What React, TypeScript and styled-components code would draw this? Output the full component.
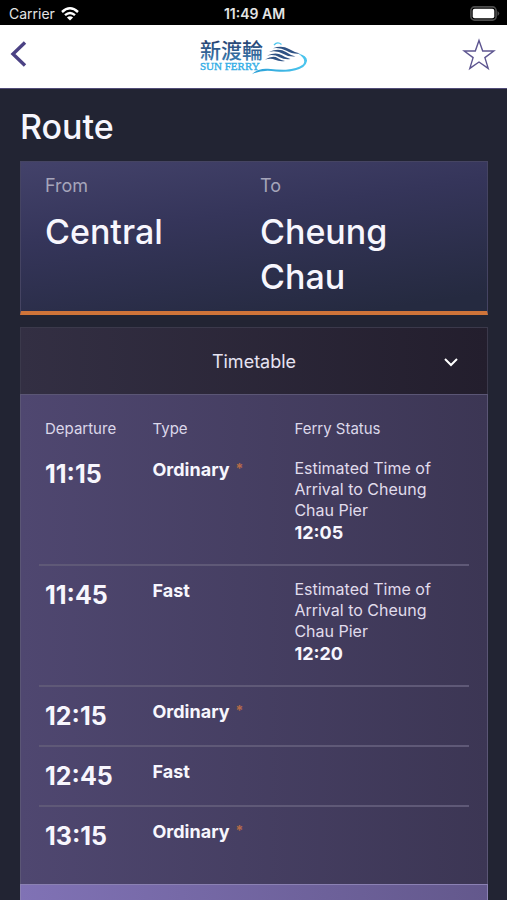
import React from "react";
import styled, { createGlobalStyle } from "styled-components";

const GlobalStyle = createGlobalStyle`
  *, *::before, *::after { box-sizing: border-box; }
  body {
    margin: 0;
    background: #222433;
    color: #f7f6fd;
    font-family: Inter, "Noto Sans CJK TC", sans-serif;
  }
  button { font: inherit; color: inherit; }
`;

const Screen = styled.div`
  min-height: 100vh;
  display: flex;
  flex-direction: column;
`;

const StatusBar = styled.div`
  height: 25px;
  padding: 2px 7px 0 9px;
  display: grid;
  grid-template-columns: 1fr auto 1fr;
  align-items: center;
  background: #000;
  color: #e4e4e4;
  font-size: 14px;
  line-height: 20px;
`;

const Carrier = styled.div`
  display: flex;
  align-items: center;
  gap: 6px;
`;

const Clock = styled.time`
  font-weight: 600;
`;

const Battery = styled.svg`
  justify-self: end;
`;

const NavBar = styled.header`
  height: 64px;
  padding: 0 11px 4px 9px;
  display: grid;
  grid-template-columns: 1fr auto 1fr;
  align-items: center;
  background: #fff;
  border-bottom: 1px solid #514b77;
`;

const IconButton = styled.button<{ $end?: boolean }>`
  display: flex;
  padding: 0;
  border: 0;
  background: none;
  justify-self: ${(p) => (p.$end ? "end" : "start")};
`;

const Content = styled.main`
  flex: 1;
  display: flex;
  flex-direction: column;
  padding: 14px 19px 0 20px;
`;

const PageTitle = styled.h1`
  margin: 0 0 10px;
  font-size: 34px;
  line-height: 48px;
  font-weight: 500;
`;

const RouteCard = styled.section`
  display: grid;
  grid-template-columns: 1fr 1fr;
  column-gap: 12px;
  padding: 12px 24px;
  border: 1px solid #454462;
  border-bottom: 4px solid #cf7439;
  background: linear-gradient(172deg, #43426a 0%, #35355a 38%, #252a40 92%);
`;

const StopLabel = styled.div`
  font-size: 18px;
  line-height: 24px;
  color: #a5a5ba;
`;

const StopName = styled.div`
  margin-top: 11px;
  font-size: 34px;
  line-height: 45px;
  font-weight: 500;
`;

const Timetable = styled.section`
  flex: 1;
  display: flex;
  flex-direction: column;
  margin-top: 12px;
`;

const TimetableToggle = styled.button`
  height: 67px;
  padding: 2px 28px 0;
  display: grid;
  grid-template-columns: 1fr auto 1fr;
  align-items: center;
  border: 1px solid #3b394b;
  border-bottom: 0;
  background: linear-gradient(90deg, #332f43, #231e2d);
  color: #e6e3f2;
  font-size: 18px;
  line-height: 24px;
`;

const ToggleLabel = styled.span`
  grid-column: 2;
`;

const Chevron = styled.svg`
  justify-self: end;
`;

const Panel = styled.div`
  padding: 16px 18px 19px;
  border: 1px solid #5b5675;
  border-bottom: 0;
  background: linear-gradient(90deg, #4f4770, #3c3654);
`;

const Table = styled.table`
  width: 100%;
  table-layout: fixed;
  border-collapse: collapse;
  text-align: left;
`;

const HeadCell = styled.th<{ $width?: string }>`
  width: ${(p) => p.$width ?? "auto"};
  padding: 8px 6px 6px;
  font-size: 15px;
  line-height: 20px;
  font-weight: 400;
  color: #dcd8ea;
`;

const Row = styled.tr`
  & + & { border-top: 2px solid #5f5977; }
`;

const Cell = styled.td`
  padding: 12px 6px;
  vertical-align: top;
`;

const Departure = styled.div`
  padding: 1px 0;
  font-size: 25px;
  line-height: 32px;
  font-weight: 700;
`;

const FerryType = styled.div`
  display: flex;
  gap: 6px;
  font-size: 18px;
  line-height: 26px;
  font-weight: 700;
`;

const Mark = styled.span`
  color: #b56b48;
  font-size: 14px;
  line-height: 24px;
`;

const FerryStatus = styled.div`
  padding: 1px 0 7px;
`;

const StatusText = styled.div`
  font-size: 16px;
  line-height: 21px;
  color: #e0dcec;
`;

const Arrival = styled.div`
  font-size: 18px;
  line-height: 24px;
  font-weight: 700;
`;

const NextSection = styled.div`
  flex: 1;
  border: 1px solid #8b81b3;
  border-bottom: 0;
  background: linear-gradient(90deg, #8072b5, #63588c);
`;

interface Sailing {
  time: string;
  type: string;
  marked?: boolean;
  arrival?: string;
}

const sailings: Sailing[] = [
  { time: "11:15", type: "Ordinary", marked: true, arrival: "12:05" },
  { time: "11:45", type: "Fast", arrival: "12:20" },
  { time: "12:15", type: "Ordinary", marked: true },
  { time: "12:45", type: "Fast" },
  { time: "13:15", type: "Ordinary", marked: true },
];

const WifiIcon = () => (
  <svg width="18" height="14" viewBox="0 0 18 14" fill="none" stroke="#fff" strokeWidth="2.4" aria-hidden="true">
    <path d="M1 5Q9-2.4 17 5" />
    <path d="M4 8.2Q9 3.6 14 8.2" />
    <path d="M9 13.6L5.9 10.4Q9 7.9 12.1 10.4Z" fill="#fff" stroke="none" />
  </svg>
);

const BatteryIcon = () => (
  <Battery width="30" height="15" viewBox="0 0 30 15" aria-label="Battery full">
    <rect x="0.9" y="0.9" width="25.2" height="13.2" rx="3.6" fill="#000" stroke="#4d4d4d" strokeWidth="1.6" />
    <rect x="2.7" y="2.7" width="21.6" height="9.6" rx="2" fill="#fff" />
    <path d="M27.5 5Q31 7.5 27.5 10Z" fill="#4d4d4d" />
  </Battery>
);

const Logo = () => (
  <svg width="110" height="54" viewBox="0 -9 110 54" role="img" aria-label="Sun Ferry">
    <defs>
      <linearGradient id="ink" x1="0" y1="0" x2="0" y2="1">
        <stop offset="0.2" stopColor="#263f6e" />
        <stop offset="1" stopColor="#3f86bd" />
      </linearGradient>
      <linearGradient id="wave" x1="0" y1="0" x2="1" y2="0">
        <stop offset="0" stopColor="#2a9fd6" />
        <stop offset="1" stopColor="#4cc6ee" />
      </linearGradient>
    </defs>
    <text x="2" y="21" fontFamily="Noto Sans CJK TC, sans-serif" fontWeight="500" fontSize="21" fill="url(#ink)">新渡輪</text>
    <text x="2" y="33" fontFamily="Liberation Serif, serif" fontSize="11" fill="#35aee6" stroke="#35aee6" strokeWidth="0.4">SUN FERRY</text>
    <path d="M76 8Q79.500 4 83.500 7.500" fill="none" stroke="#4cc6ee" strokeWidth="1.3" />
    <g fill="#2f5284">
      <path d="M75 11.200Q84 8 91 12Q96 15 102 16.600Q94 17.200 88.500 13.800Q82 10 75 11.200Z" />
      <path d="M71 14.800Q81 10.800 88 15Q92 18 97.500 19.400Q90.500 20 85.500 17Q79 13 71 14.800Z" />
      <path d="M69 18.600Q78 14.400 84 18.200Q87.500 20.800 92.500 22Q86.500 22.800 81.500 20.200Q76 16.800 69 18.600Z" />
      <path d="M67 22.600Q75 17.800 80 21.200Q83 23.200 87 24Q81.500 24.800 77 22.800Q73 20.600 67 22.600Z" />
    </g>
    <path d="M100 16.400Q109.500 18.500 109 24Q108 30.500 97.500 33.200Q89 35.600 78 34.400Q64 32 54 37.200Q60 31 70 31.800Q80 33 88 32.800Q99 31.800 105 27.600Q109 22 100 16.400Z" fill="url(#wave)" />
  </svg>
);

export default function App() {
  return (
    <Screen>
      <GlobalStyle />
      <StatusBar>
        <Carrier>
          Carrier
          <WifiIcon />
        </Carrier>
        <Clock>11:49 AM</Clock>
        <BatteryIcon />
      </StatusBar>
      <NavBar>
        <IconButton type="button" aria-label="Back">
          <svg width="20" height="32" viewBox="0 0 20 32" fill="none" stroke="#4b4284" strokeWidth="3.4">
            <path d="M16 3.500L4 15L16 26.500" />
          </svg>
        </IconButton>
        <Logo />
        <IconButton type="button" aria-label="Add to favourites" $end>
          <svg width="34" height="34" viewBox="0 0 34 34" fill="none" stroke="#5d5590" strokeWidth="1.4">
            <path d="M17 2.400L20.700 13H31.800L22.900 19.600L26.200 30.400L17 24L7.800 30.400L11.100 19.600L2.200 13H13.300Z" />
          </svg>
        </IconButton>
      </NavBar>
      <Content>
        <PageTitle>Route</PageTitle>
        <RouteCard>
          <div>
            <StopLabel>From</StopLabel>
            <StopName>Central</StopName>
          </div>
          <div>
            <StopLabel>To</StopLabel>
            <StopName>Cheung Chau</StopName>
          </div>
        </RouteCard>
        <Timetable>
          <TimetableToggle type="button" aria-expanded="true">
            <ToggleLabel>Timetable</ToggleLabel>
            <Chevron width="16" height="10" viewBox="0 0 16 10" fill="none" stroke="#fff" strokeWidth="2">
              <path d="M2 2L8 8L14 2" />
            </Chevron>
          </TimetableToggle>
          <Panel>
            <Table>
              <thead>
                <tr>
                  <HeadCell scope="col" $width="25%">Departure</HeadCell>
                  <HeadCell scope="col" $width="33%">Type</HeadCell>
                  <HeadCell scope="col">Ferry Status</HeadCell>
                </tr>
              </thead>
              <tbody>
                {sailings.map((s) => (
                  <Row key={s.time}>
                    <Cell>
                      <Departure>{s.time}</Departure>
                    </Cell>
                    <Cell>
                      <FerryType>
                        {s.type}
                        {s.marked && <Mark>*</Mark>}
                      </FerryType>
                    </Cell>
                    <Cell>
                      {s.arrival && (
                        <FerryStatus>
                          <StatusText>Estimated Time of Arrival to Cheung Chau Pier</StatusText>
                          <Arrival>{s.arrival}</Arrival>
                        </FerryStatus>
                      )}
                    </Cell>
                  </Row>
                ))}
              </tbody>
            </Table>
          </Panel>
          <NextSection />
        </Timetable>
      </Content>
    </Screen>
  );
}
